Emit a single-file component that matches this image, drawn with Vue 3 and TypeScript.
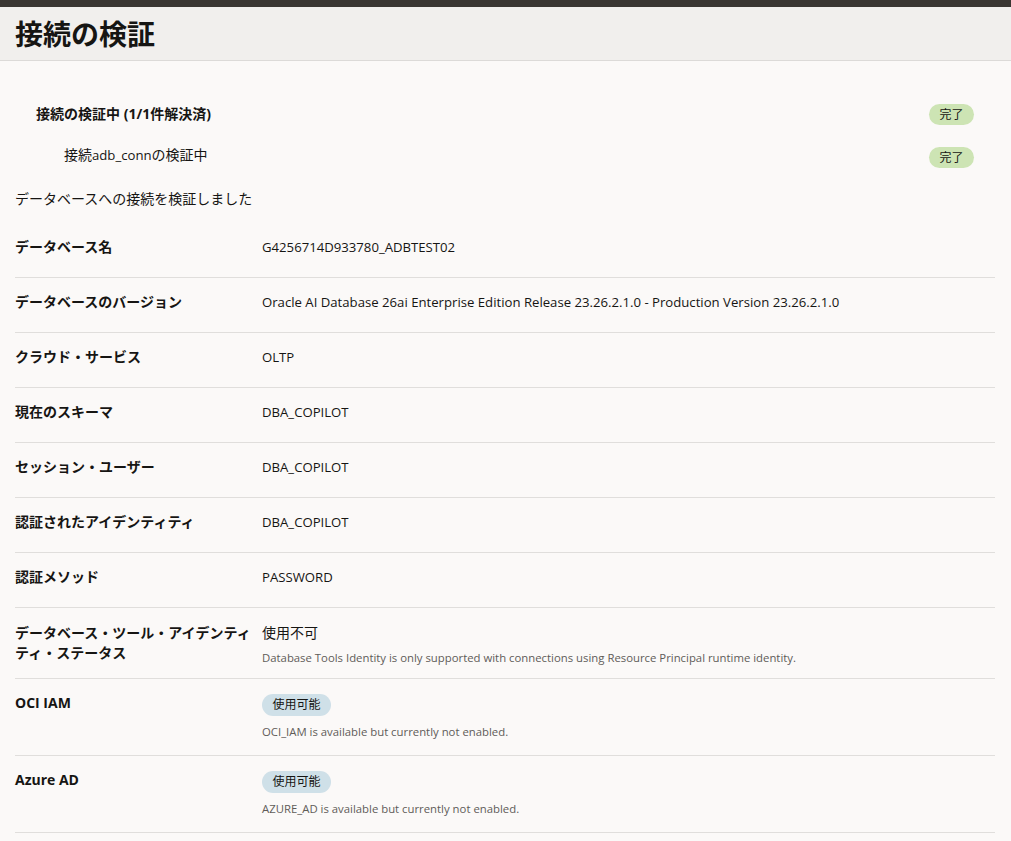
<script setup lang="ts">
interface Row { label: string; value?: string; badge?: string; note?: string; kind: string; cjkValue?: boolean }
const rows: Row[] = [
  { label: 'データベース名', value: 'G4256714D933780_ADBTEST02', kind: 'plain' },
  { label: 'データベースのバージョン', value: 'Oracle AI Database 26ai Enterprise Edition Release 23.26.2.1.0 - Production Version 23.26.2.1.0', kind: 'plain' },
  { label: 'クラウド・サービス', value: 'OLTP', kind: 'plain' },
  { label: '現在のスキーマ', value: 'DBA_COPILOT', kind: 'plain' },
  { label: 'セッション・ユーザー', value: 'DBA_COPILOT', kind: 'plain' },
  { label: '認証されたアイデンティティ', value: 'DBA_COPILOT', kind: 'plain' },
  { label: '認証メソッド', value: 'PASSWORD', kind: 'plain' },
  { label: 'データベース・ツール・アイデンティティ・ステータス', value: '使用不可', cjkValue: true, note: 'Database Tools Identity is only supported with connections using Resource Principal runtime identity.', kind: 'noted' },
  { label: 'OCI IAM', badge: '使用可能', note: 'OCI_IAM is available but currently not enabled.', kind: 'badged' },
  { label: 'Azure AD', badge: '使用可能', note: 'AZURE_AD is available but currently not enabled.', kind: 'badged' },
]
</script>

<template>
  <div class="page">
    <div class="topbar"></div>
    <header class="header"><h1>接続の検証</h1></header>
    <main class="content">
      <div class="step step-main">
        <span class="step-text">接続の検証中 (1/1件解決済)</span>
        <span class="pill done">完了</span>
      </div>
      <div class="step step-sub">
        <span class="step-text">接続<span class="latin">adb_conn</span>の検証中</span>
        <span class="pill done">完了</span>
      </div>
      <p class="summary">データベースへの接続を検証しました</p>
      <div class="table">
        <div v-for="row in rows" :key="row.label" class="row" :class="row.kind">
          <div class="label">{{ row.label }}</div>
          <div class="value">
            <div v-if="row.value" :class="{ latin: !row.cjkValue }">{{ row.value }}</div>
            <span v-if="row.badge" class="pill info">{{ row.badge }}</span>
            <div v-if="row.note" class="note">{{ row.note }}</div>
          </div>
        </div>
      </div>
    </main>
  </div>
</template>

<style>
html, body { margin: 0; background: #fbf9f8; }
</style>

<style scoped>
.page {
  font-family: "Open Sans", "Noto Sans CJK JP", sans-serif;
  font-size: 14px;
  color: #161513;
  background: #fbf9f8;
  height: 841px;
  overflow: hidden;
}
.latin { font-size: 13.17px; }
.topbar { height: 7px; background: #3a3632; }
.header {
  height: 53px;
  background: #f1efed;
  border-bottom: 1px solid #dcdad8;
  padding: 0 15px;
  display: flex;
  align-items: center;
}
h1 { margin: 0; font-size: 28px; font-weight: 700; line-height: 54px; padding-top: 1px; }
.content { padding: 0 16px 0 15px; }
.step { display: flex; justify-content: space-between; align-items: center; padding-right: 21px; }
.step-main { height: 28px; margin-top: 39px; padding-left: 21px; font-weight: 700; }
.step-sub { height: 28px; margin-top: 15px; padding-left: 49px; }
.step-main .step-text { margin-bottom: 3px; }
.step-sub .step-text { margin-bottom: 6px; }
.pill {
  display: inline-flex;
  align-items: center;
  justify-content: center;
  height: 21px;
  border-radius: 11px;
  font-size: 12px;
  font-weight: 400;
  box-sizing: border-box;
}
.done { background: #cde4b4; width: 45px; }
.info { background: #cfe0e8; width: 69px; height: 22px; }
.summary { margin: 18px 0 0; line-height: 20px; height: 20px; }
.table { margin-top: 14px; }
.row { display: flex; border-bottom: 1px solid #e0dedc; box-sizing: border-box; }
.plain { height: 55px; padding-top: 14px; }
.noted { height: 71px; padding-top: 15px; }
.badged { height: 77px; padding-top: 14px; }
.label { width: 247px; flex: none; font-weight: 700; line-height: 20px; padding-right: 8px; box-sizing: border-box; }
.note { font-size: 11.35px; color: #5f5c58; line-height: 14px; }
.noted .note { margin-top: 8px; }
.badged .note { margin-top: 9px; }
.badged .pill { margin-top: 1px; }
.value { line-height: 20px; }
</style>
